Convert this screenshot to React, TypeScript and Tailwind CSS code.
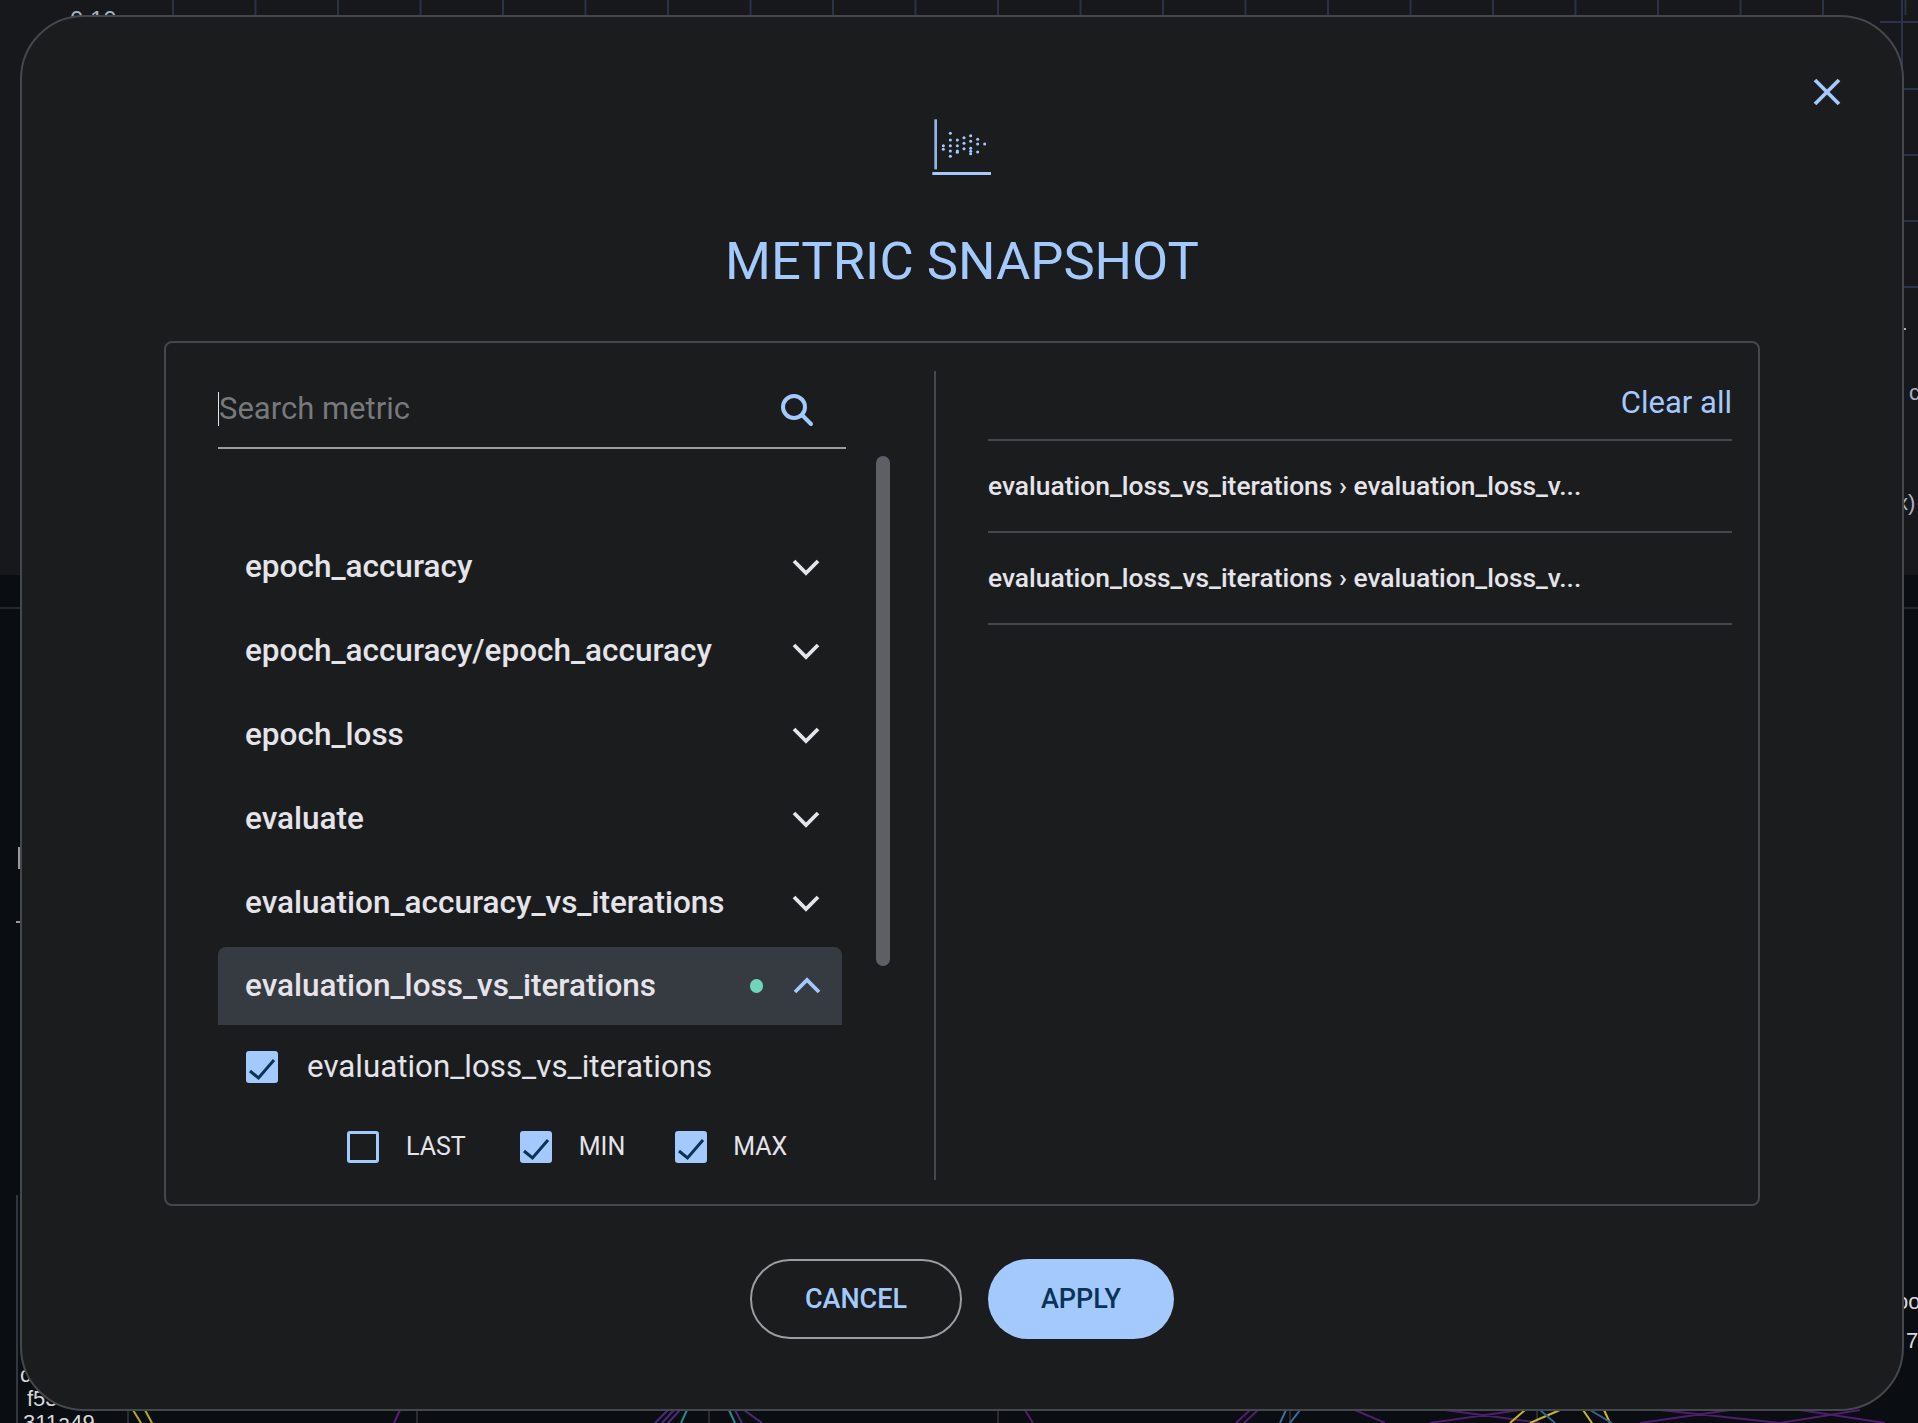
import React from "react";

const DOTS: [number, number][] = [
  [190, 167], [190, 178], [211, 130], [211, 150], [211, 167], [211, 183], [211, 199],
  [232, 150], [232, 167], [232, 183], [232, 187], [252, 143], [252, 160], [252, 176],
  [272, 137], [272, 154], [272, 175], [272, 184], [272, 191], [293, 148], [293, 162], [293, 186], [314, 162],
];

function Logo() {
  return (
    <svg width="60" height="60" viewBox="156 87 180 180" className="block">
      <rect x="163" y="88" width="8" height="150" fill="#8fb4e6" />
      <rect x="157" y="246" width="176" height="9" fill="#a3c9fd" />
      {DOTS.map(([x, y], i) => (
        <circle key={i} cx={x} cy={y} r="4.6" fill="#a3c9fd" />
      ))}
    </svg>
  );
}

function Chevron({ up = false, color = "#e4e4ea" }: { up?: boolean; color?: string }) {
  return (
    <svg width="28" height="18" viewBox="0 0 28 18" className="block">
      <path d={up ? "M2 15 L14 3 L26 15" : "M2 3 L14 15 L26 3"} fill="none" stroke={color} strokeWidth="3.8" />
    </svg>
  );
}

function Check({ on }: { on: boolean }) {
  return on ? (
    <span className="block w-8 h-8 rounded-[3px] bg-[#a3c9fd]">
      <svg width="32" height="32" viewBox="0 0 32 32" className="block">
        <path d="M4 20 L12.5 27 L28 9" fill="none" stroke="#0a3358" strokeWidth="3" />
      </svg>
    </span>
  ) : (
    <span className="block w-8 h-8 rounded-[3px] border-[3px] border-[#a3c9fd]" />
  );
}

function Row({ label }: { label: string }) {
  return (
    <div className="h-[84px] pl-[27px] pr-[22px] flex items-center justify-between text-[31.5px] font-medium text-[#e4e4ea]">
      <span>{label}</span>
      <Chevron />
    </div>
  );
}

function Sub({ label, on, className, gap }: { label: string; on: boolean; className: string; gap: string }) {
  return (
    <div className={`flex items-center ${gap} ${className}`}>
      <Check on={on} />
      <span className="text-[25px] text-[#e4e4ea]">{label}</span>
    </div>
  );
}

function Selected() {
  return (
    <div className="h-[92px] pt-[2px] border-b-2 border-[#44474b] flex items-center text-[26.4px] font-medium text-[#e4e4ea]">
      evaluation_loss_vs_iterations › evaluation_loss_v...
    </div>
  );
}

const GRID_X = Array.from({ length: 22 }, (_, i) => 173 + i * 82.5);

function Backdrop() {
  return (
    <div className="h-[1423px] flex flex-col bg-[#0a0d12] overflow-hidden">
      <div className="h-[575px] bg-[#16181c]" />
      <div className="h-[34px] border-b-2 border-[#24262b]" />
      <svg width="1918" height="1423" className="absolute left-0 top-0">
        {GRID_X.map((x) => (
          <line key={x} x1={x} y1="0" x2={x} y2="15" stroke="#2b3148" strokeWidth="2" />
        ))}
        <line x1="1902" y1="0" x2="1902" y2="70" stroke="#2b3148" strokeWidth="2" />
        {[22, 89, 155, 221, 287].map((y) => (
          <line key={y} x1="1880" y1={y} x2="1918" y2={y} stroke="#2b3148" strokeWidth="2" />
        ))}
        <rect x="1904" y="328" width="2" height="2" fill="#a9b0c6" />
        <rect x="18" y="847" width="2" height="22" fill="#9a9a9a" />
        <rect x="16" y="921" width="4" height="2" fill="#9a9a9a" />
        <line x1="17" y1="1195" x2="17" y2="1423" stroke="#33363c" strokeWidth="2" />
        {[128, 417, 709, 998, 1290, 1537].map((x) => (
          <line key={x} x1={x} y1="1405" x2={x} y2="1423" stroke="#2a2c32" strokeWidth="2" />
        ))}
        <path d="M133 1410 L141 1423 M145 1410 L152 1423" stroke="#b5a91c" strokeWidth="2" fill="none" />
        <path d="M400 1410 L394 1423" stroke="#5a1f75" strokeWidth="2" fill="none" />
        <path d="M668 1410 L655 1423 M674 1410 L662 1423 M680 1410 L668 1423" stroke="#4b2a7a" strokeWidth="2" fill="none" />
        <path d="M687 1410 L681 1423 M729 1410 L735 1423" stroke="#2b8a8f" strokeWidth="2" fill="none" />
        <path d="M735 1410 L742 1423 M744 1410 L762 1423" stroke="#4b2a7a" strokeWidth="2" fill="none" />
        <path d="M1025 1410 L1033 1423 M1250 1410 L1236 1423 M1258 1410 L1244 1423" stroke="#4f1d6d" strokeWidth="2" fill="none" />
        <path d="M1286 1410 L1280 1423 M1300 1410 L1290 1423" stroke="#3e6f9c" strokeWidth="2" fill="none" />
        <path d="M1355 1410 L1385 1423 M1430 1423 L1520 1410 M1445 1410 L1540 1423 M1640 1423 L1730 1410 M1660 1410 L1780 1423 M1780 1423 L1860 1410 M1800 1410 L1885 1423" stroke="#4f1d6d" strokeWidth="2" fill="none" />
        <path d="M1510 1423 L1525 1410 M1530 1423 L1560 1410" stroke="#c9b81f" strokeWidth="2" fill="none" />
        <path d="M1583 1410 L1592 1423 M1604 1410 L1610 1423" stroke="#c9b81f" strokeWidth="2" fill="none" />
        <path d="M1590 1410 L1612 1423 M1555 1423 L1540 1410" stroke="#3b5f8f" strokeWidth="2" fill="none" />
      </svg>
      <span className="absolute left-[70px] top-[2px] text-[24px] text-[#a9b0c6] font-['Liberation_Sans',sans-serif]">0.10</span>
      <span className="absolute left-[20px] top-[1362px] text-[22px] leading-[26px] text-[#d8d8d8] font-['Liberation_Sans',sans-serif]">c</span>
      <span className="absolute left-[27px] top-[1386px] text-[22px] leading-[26px] text-[#d8d8d8] font-['Liberation_Sans',sans-serif]">f53</span>
      <span className="absolute left-[23px] top-[1410px] text-[22px] leading-[26px] text-[#d8d8d8] font-['Liberation_Sans',sans-serif]">311a49</span>
      <span className="absolute left-[1896px] top-[1289px] text-[22px] leading-[26px] text-[#d8d8d8] font-['Liberation_Sans',sans-serif]">oo</span>
      <span className="absolute left-[1906px] top-[1328px] text-[22px] leading-[26px] text-[#d8d8d8] font-['Liberation_Sans',sans-serif]">7</span>
      <span className="absolute left-[1897px] top-[490px] text-[22px] leading-[26px] text-[#a9b0c6] font-['Liberation_Sans',sans-serif]">x)</span>
      <span className="absolute left-[1909px] top-[380px] text-[22px] leading-[26px] text-[#a9b0c6] font-['Liberation_Sans',sans-serif]">c</span>
    </div>
  );
}

export default function App() {
  return (
    <div className="relative w-[1918px] h-[1423px] overflow-hidden font-['Roboto',sans-serif]">
      <Backdrop />
      <div className="absolute left-[20px] top-[15px] w-[1884px] h-[1396px] rounded-[64px] border-2 border-[#44474b] bg-[#1b1c1e] flex flex-col items-center pt-[102px]">
        <button className="absolute left-[1789px] top-[59px]">
          <svg width="32" height="32" viewBox="0 0 32 32" className="block">
            <path d="M4 4 L28 28 M28 4 L4 28" stroke="#a3c9fd" strokeWidth="3.8" fill="none" />
          </svg>
        </button>
        <Logo />
        <h1 className="mt-[47px] text-[52.6px] leading-[70px] font-normal text-[#a3c9fd]">METRIC SNAPSHOT</h1>
        <div className="mt-[45px] w-[1596px] h-[865px] rounded-[8px] border-2 border-[#44474b] flex pt-[28px] pb-[24px]">
          <div className="relative w-[768px] pl-[52px] flex flex-col overflow-hidden">
            <div className="w-[628px] h-[78px] shrink-0 border-b-2 border-[#9b9da0] flex items-start justify-between pt-[21px] pr-[32px]">
              <span className="border-l border-[#e4e4ea] h-[34px] leading-[34px] text-[31px] text-[#77797c]">Search metric</span>
              <svg width="34" height="34" viewBox="0 0 34 34" className="block mt-[1px]">
                <circle cx="14" cy="14" r="11" fill="none" stroke="#a3c9fd" strokeWidth="4" />
                <path d="M22 22 L31 31" stroke="#a3c9fd" strokeWidth="4" strokeLinecap="round" />
              </svg>
            </div>
            <div className="absolute left-[710px] top-[85px] w-[14px] h-[510px] rounded-full bg-[#5d5f65]" />
            <div className="w-[624px] pt-[76px]">
              <Row label="epoch_accuracy" />
              <Row label="epoch_accuracy/epoch_accuracy" />
              <Row label="epoch_loss" />
              <Row label="evaluate" />
              <Row label="evaluation_accuracy_vs_iterations" />
              <div className="mt-[2px] h-[78px] rounded-t-[8px] bg-[#363a41] pl-[27px] pr-[21px] flex items-center text-[31.5px] font-medium text-[#e4e4ea]">
                <span className="flex-1">evaluation_loss_vs_iterations</span>
                <span className="w-[13px] h-[14px] rounded-full bg-[#6fd6bc] mr-[30px]" />
                <Chevron up color="#a3c9fd" />
              </div>
              <div className="h-[84px] pl-[28px] flex items-center gap-[29px]">
                <Check on />
                <span className="text-[31.3px] text-[#e4e4ea]">evaluation_loss_vs_iterations</span>
              </div>
              <div className="h-[76px] pl-[129px] flex items-center">
                <Sub label="LAST" on={false} gap="gap-[27px]" className="mr-[54px]" />
                <Sub label="MIN" on gap="gap-[27px]" className="mr-[50px]" />
                <Sub label="MAX" on gap="gap-[26px]" className="" />
              </div>
            </div>
          </div>
          <div className="w-[2px] bg-[#44474b]" />
          <div className="flex-1 pl-[52px] pr-[26px] flex flex-col">
            <div className="h-[70px] border-b-2 border-[#44474b] flex items-start justify-end pt-[14px] text-[31px] leading-[36px] text-[#a3c9fd]">
              Clear all
            </div>
            <Selected />
            <Selected />
          </div>
        </div>
        <div className="mt-[53px] flex gap-[26px]">
          <button className="w-[212px] h-[80px] rounded-full border-2 border-[#9b9da0] text-[27px] font-medium text-[#a3c9fd]">CANCEL</button>
          <button className="w-[186px] h-[80px] rounded-full bg-[#a3c9fd] text-[27px] font-medium text-[#0a3358]">APPLY</button>
        </div>
      </div>
    </div>
  );
}
